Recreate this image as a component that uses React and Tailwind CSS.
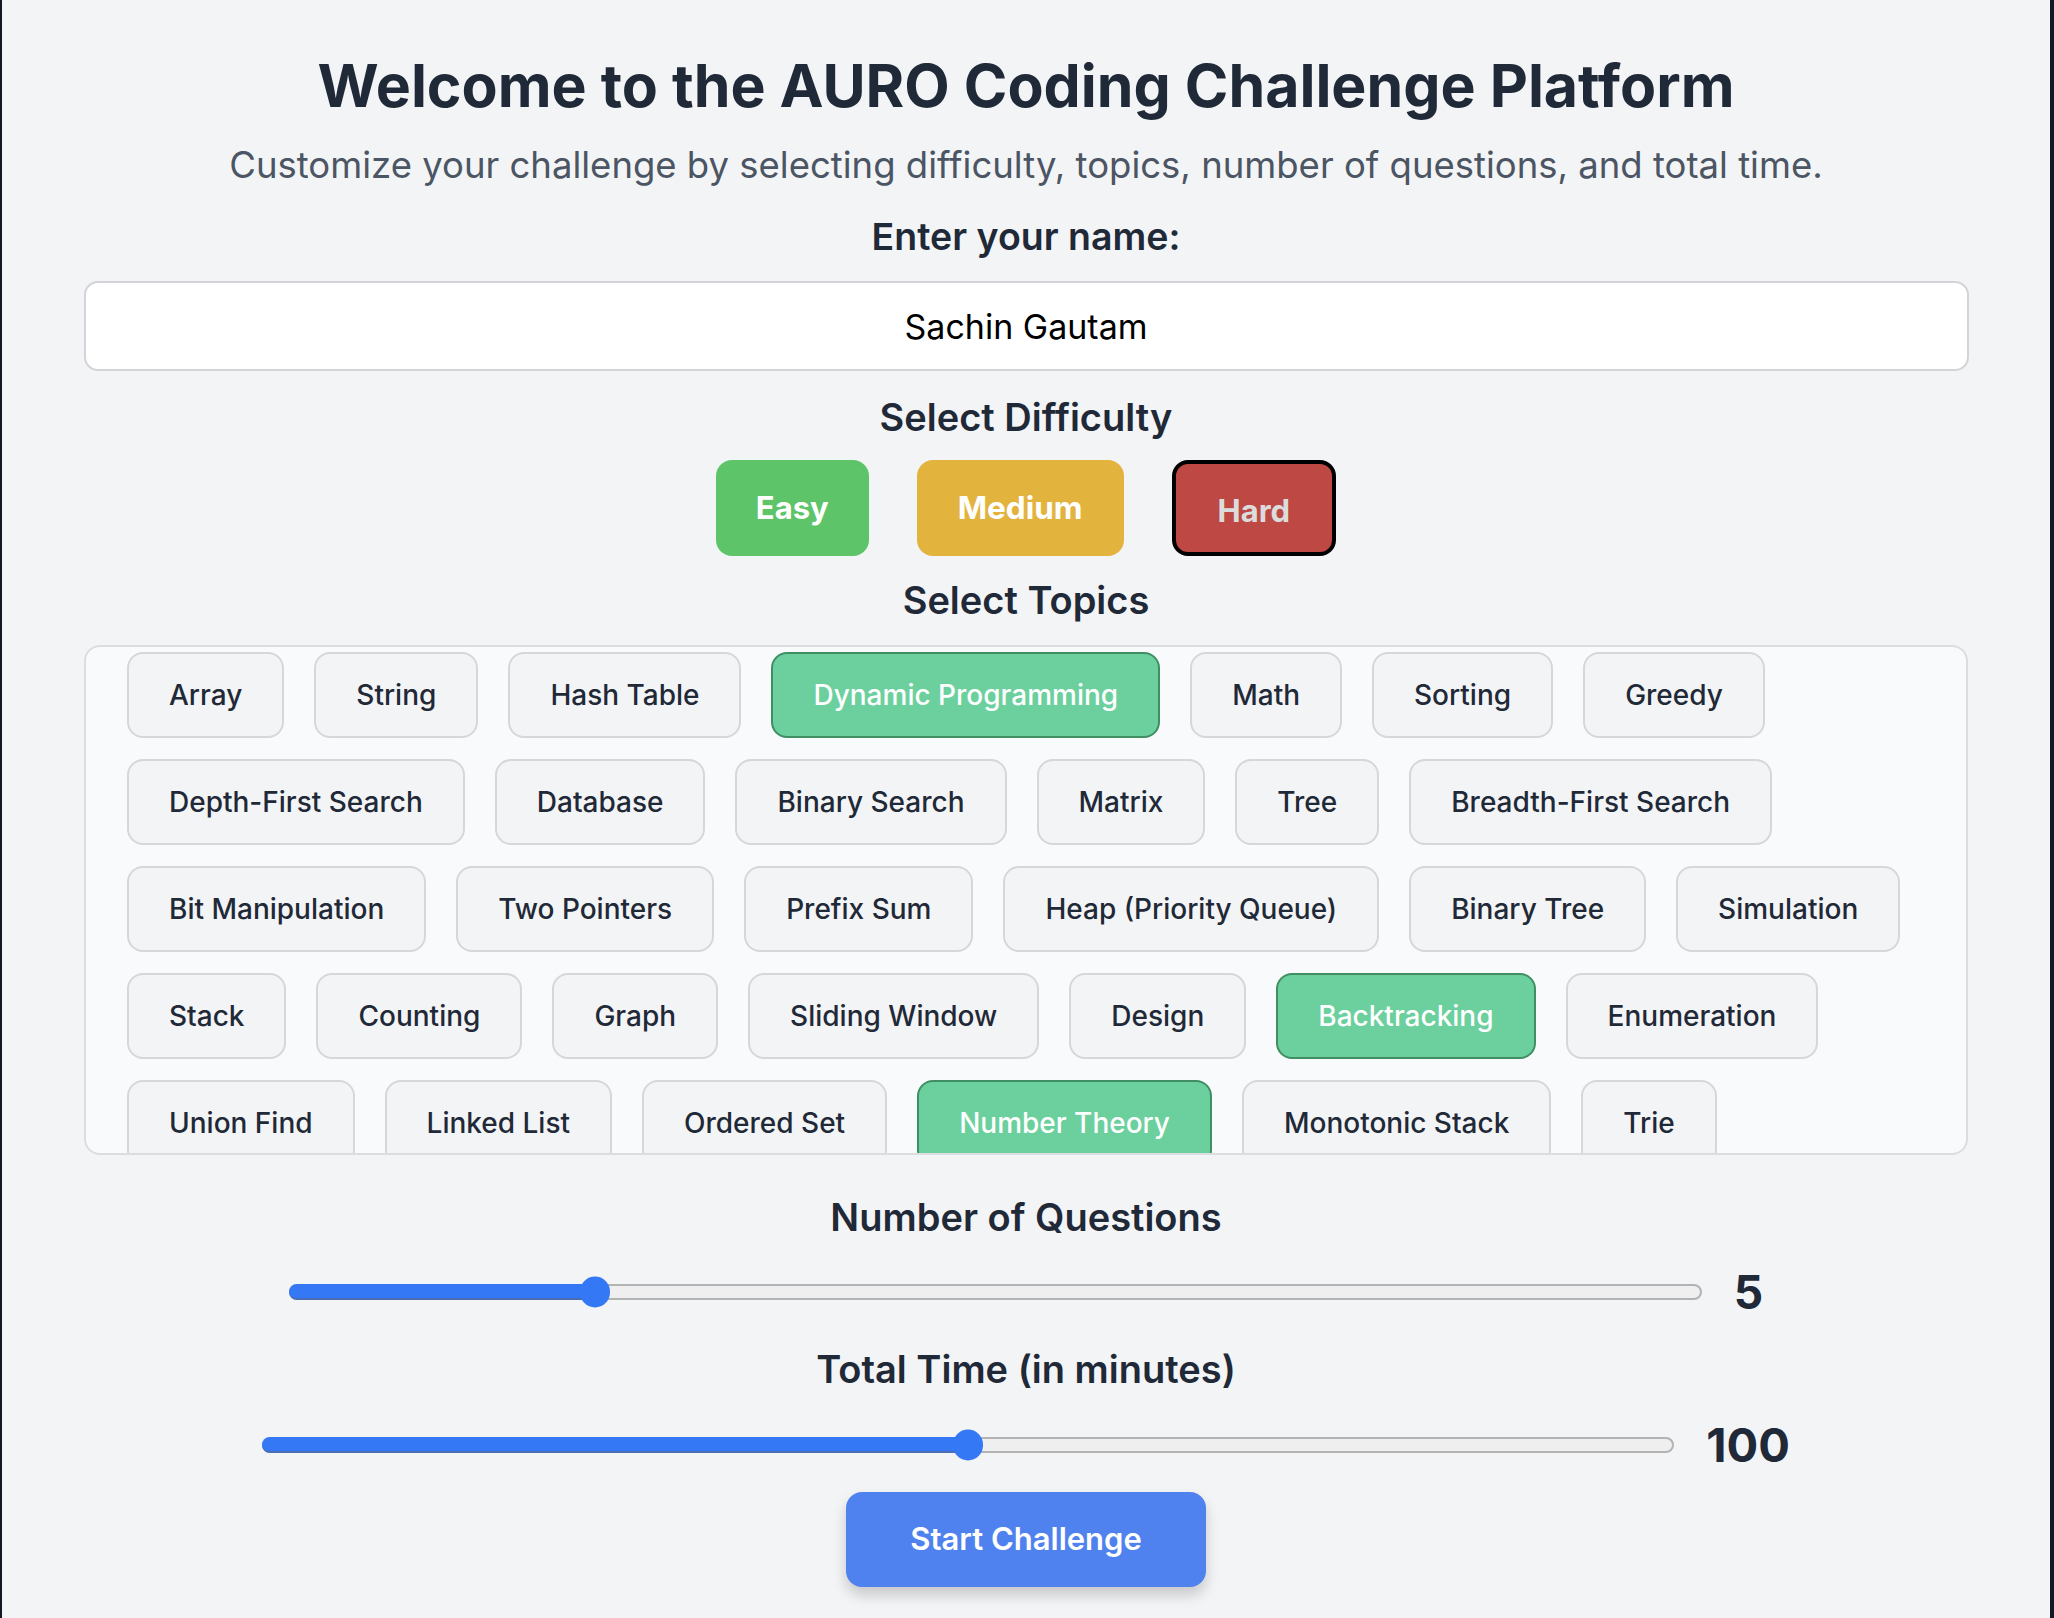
import React, { useState } from 'react';

const topics = [
  'Array', 'String', 'Hash Table', 'Dynamic Programming', 'Math', 'Sorting', 'Greedy',
  'Depth-First Search', 'Database', 'Binary Search', 'Matrix', 'Tree', 'Breadth-First Search',
  'Bit Manipulation', 'Two Pointers', 'Prefix Sum', 'Heap (Priority Queue)', 'Binary Tree', 'Simulation',
  'Stack', 'Counting', 'Graph', 'Sliding Window', 'Design', 'Backtracking', 'Enumeration',
  'Union Find', 'Linked List', 'Ordered Set', 'Number Theory', 'Monotonic Stack', 'Trie',
];

const RangeBar = ({ value, min, max, trackWidth }) => {
  const frac = (value - min) / (max - min);
  const center = 15 + frac * (trackWidth - 30);
  return (
    <div className="relative h-[16px]" style={{ width: trackWidth }}>
      <div className="absolute inset-0 rounded-full border-2 border-[#b3b3b3] bg-[#efefef]" />
      <div
        className="absolute left-0 top-0 h-full rounded-full bg-[#3478f6] border-b-2 border-[#4a6db4]"
        style={{ width: center }}
      />
      <div
        className="absolute top-1/2 h-[31px] w-[30px] -translate-x-1/2 -translate-y-1/2 rounded-full bg-[#3478f6]"
        style={{ left: center }}
      />
    </div>
  );
};

const App = () => {
  const [name, setName] = useState('Sachin Gautam');
  const [selected, setSelected] = useState(['Dynamic Programming', 'Backtracking', 'Number Theory']);
  const [difficulty, setDifficulty] = useState('Hard');

  const toggleTopic = (topic) => {
    setSelected((prev) =>
      prev.includes(topic) ? prev.filter((t) => t !== topic) : [...prev, topic]
    );
  };

  return (
    <div className="min-h-screen bg-[#111827] pl-[2px] pr-[4px]" style={{ fontFamily: 'Inter, "Noto Sans", sans-serif' }}>
      <div className="flex min-h-[1618px] flex-col items-center bg-[#f3f4f6] text-[#1f2937]">
        <h1 className="mt-[56px] text-[59px] font-bold leading-[60px]">
          Welcome to the AURO Coding Challenge Platform
        </h1>
        <p className="mt-[25px] text-[36.5px] leading-[48px] text-[#4b5563]">
          Customize your challenge by selecting difficulty, topics, number of questions, and total time.
        </p>

        <label className="mt-[24px] text-[37.5px] font-semibold leading-[48px]">Enter your name:</label>
        <input
          value={name}
          onChange={(e) => setName(e.target.value)}
          className="mt-[20px] h-[90px] w-[1885px] rounded-[14px] border-2 border-[#d4d4d8] bg-white text-center text-[34px] text-black outline-none"
        />

        <h2 className="mt-[18px] text-[38px] font-semibold leading-[56px]">Select Difficulty</h2>
        <div className="mt-[15px] flex gap-[48px]">
          <button
            onClick={() => setDifficulty('Easy')}
            className="flex h-[96px] items-center rounded-[16px] bg-[#5ec46a] px-10 text-[31px] font-bold text-white"
          >
            Easy
          </button>
          <button
            onClick={() => setDifficulty('Medium')}
            className="flex h-[96px] items-center rounded-[16px] bg-[#e2b43e] px-[41px] text-[31.5px] font-bold text-white"
          >
            Medium
          </button>
          <button
            onClick={() => setDifficulty('Hard')}
            className={
              difficulty === 'Hard'
                ? 'flex h-[96px] items-center rounded-[16px] border-4 border-black bg-[#be4844] px-[42px] pt-[6px] text-[31px] font-bold text-[#dcdcdc]'
                : 'flex h-[96px] items-center rounded-[16px] bg-[#be4844] px-10 text-[31px] font-bold text-white'
            }
          >
            Hard
          </button>
        </div>

        <h2 className="mt-[16px] text-[38px] font-semibold leading-[56px]">Select Topics</h2>
        <div className="mt-[17px] h-[510px] w-[1884px] overflow-hidden rounded-[16px] border-2 border-[#dcdde1] bg-[#f9fafb] pl-[41px] pr-[8px] pt-[5px]">
          <div className="flex flex-wrap gap-x-[30px] gap-y-[21px]">
            {topics.map((topic) => (
              <button
                key={topic}
                onClick={() => toggleTopic(topic)}
                className={
                  selected.includes(topic)
                    ? 'flex h-[86px] items-center rounded-[16px] border-2 border-[#3f8f63] bg-[#6bd09d] px-10 text-[28px] font-medium text-white'
                    : 'flex h-[86px] items-center rounded-[16px] border-2 border-[#d6d7db] bg-[#f3f4f6] px-10 text-[28px] font-medium text-[#1f2937]'
                }
              >
                {topic}
              </button>
            ))}
          </div>
        </div>

        <h2 className="mt-[34px] text-[38px] font-semibold leading-[56px]">Number of Questions</h2>
        <div className="mt-[15px] flex h-[64px] items-center gap-[32px]">
          <RangeBar value={5} min={1} max={20} trackWidth={1413} />
          <span className="text-[46px] font-bold leading-[64px]">5</span>
        </div>

        <h2 className="mt-[17px] text-[38px] font-semibold leading-[56px]">Total Time (in minutes)</h2>
        <div className="mt-[16px] flex h-[64px] items-center gap-[32px]">
          <RangeBar value={100} min={0} max={200} trackWidth={1412} />
          <span className="text-[47px] font-bold leading-[64px]">100</span>
        </div>

        <button className="mt-[15px] h-[95px] rounded-[16px] bg-[#4f82ee] px-16 text-[31px] font-semibold text-white shadow-[0_8px_14px_rgba(0,0,0,0.18)]">
          Start Challenge
        </button>
      </div>
    </div>
  );
};

export default App;
